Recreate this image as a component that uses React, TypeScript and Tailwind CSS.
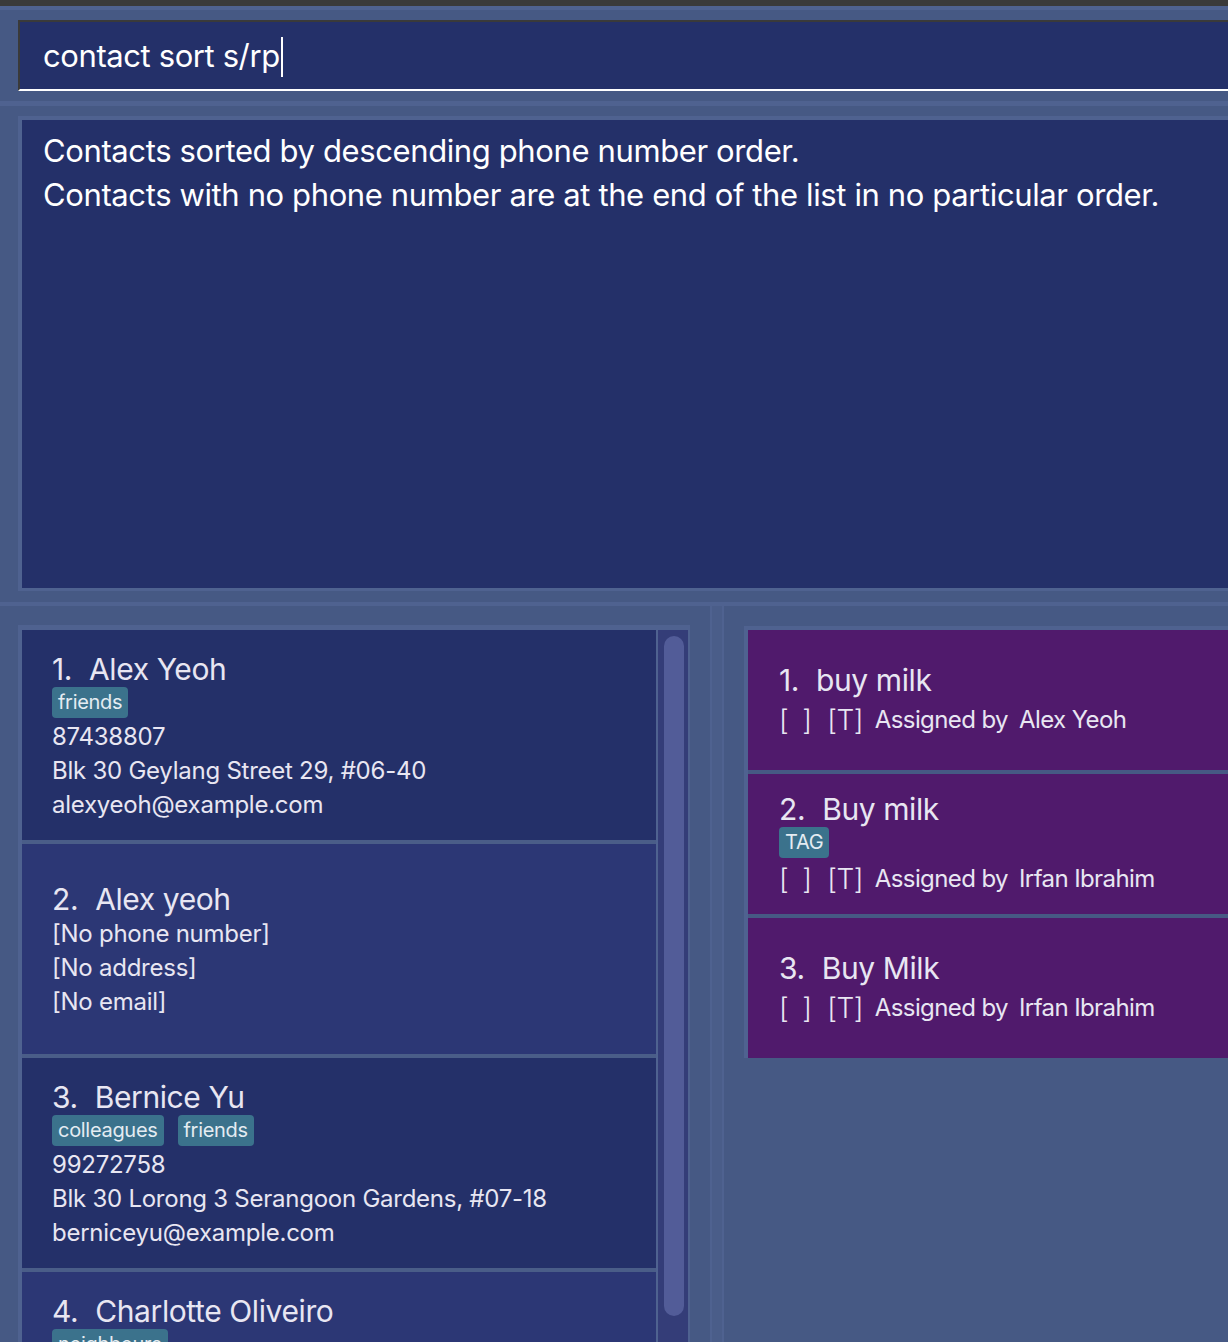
import React from "react";

type Contact = {
  name: string;
  tags: string[];
  lines: string[];
};

const contacts: Contact[] = [
  { name: "Alex Yeoh", tags: ["friends"], lines: ["87438807", "Blk 30 Geylang Street 29, #06-40", "alexyeoh@example.com"] },
  { name: "Alex yeoh", tags: [], lines: ["[No phone number]", "[No address]", "[No email]"] },
  { name: "Bernice Yu", tags: ["colleagues", "friends"], lines: ["99272758", "Blk 30 Lorong 3 Serangoon Gardens, #07-18", "berniceyu@example.com"] },
  { name: "Charlotte Oliveiro", tags: ["neighbours"], lines: ["93210283", "Blk 11 Ang Mo Kio Street 74, #11-04", "charlotte@example.com"] },
];

const tasks = [
  { name: "buy milk", tags: [] as string[], by: "Alex Yeoh" },
  { name: "Buy milk", tags: ["TAG"], by: "Irfan Ibrahim" },
  { name: "Buy Milk", tags: [] as string[], by: "Irfan Ibrahim" },
];

function Tag({ label }: { label: string }) {
  return (
    <span className="h-[31px] px-[6px] rounded-[4px] bg-[#3b728c] text-[#e4ecf2] text-[20px] leading-[31px] tracking-[-0.3px]">
      {label}
    </span>
  );
}

function ContactCard({ c, i }: { c: Contact; i: number }) {
  return (
    <div
      className={
        "h-[210px] shrink-0 flex flex-col justify-center pl-[30px] pt-[2px] text-[#e8e6f2] " +
        (i % 2 === 0 ? "bg-[#243069]" : "bg-[#2c3775]")
      }
    >
      <div className="flex text-[30px] leading-[36px] tracking-[-0.4px]">
        <span>{i + 1}.</span>
        <span className="ml-[17px]">{c.name}</span>
      </div>
      {c.tags.length > 0 && (
        <div className="flex gap-[14px] h-[33px] items-start">
          {c.tags.map((t) => (
            <Tag key={t} label={t} />
          ))}
        </div>
      )}
      {c.lines.map((l) => (
        <div key={l} className="text-[24px] leading-[34px] tracking-[-0.25px]">
          {l}
        </div>
      ))}
    </div>
  );
}

function TaskCard({ t, i }: { t: (typeof tasks)[number]; i: number }) {
  return (
    <div className="h-[140px] shrink-0 flex flex-col justify-center pl-[31px] bg-[#501a6c] text-[#e8e6f2]">
      <div className="flex text-[30px] leading-[36px] tracking-[-0.4px]">
        <span>{i + 1}.</span>
        <span className="ml-[17px]">{t.name}</span>
      </div>
      {t.tags.length > 0 && (
        <div className="flex gap-[14px] h-[31px] items-start">
          {t.tags.map((g) => (
            <Tag key={g} label={g} />
          ))}
        </div>
      )}
      <div className="flex items-center h-[40px] pt-[3px] text-[24px] tracking-[-0.6px]">
        <span className="text-[28px] font-light">[</span>
        <span className="text-[28px] font-light ml-[14px]">]</span>
        <span className="text-[28px] font-light ml-[16px]">[T]</span>
        <span className="ml-[12px]">Assigned by</span>
        <span className="ml-[11px]">{t.by}</span>
      </div>
    </div>
  );
}

export default function App() {
  return (
    <div className="w-[1228px] h-[1342px] overflow-hidden bg-[#465984] flex flex-col font-['Inter','Noto_Sans',sans-serif]">
      <div className="h-[6px] bg-[#3a3a3a] shrink-0" />
      <div className="h-[4px] bg-[#4f6290] shrink-0" />
      <div className="h-[10px] shrink-0" />

      {/* command box */}
      <div className="ml-[18px] h-[71px] shrink-0 border-t-2 border-l-2 border-[#3a3a3a] border-b-2 border-b-white bg-[#243069] flex items-center pl-[23px] pt-[2px]">
        <span className="text-white text-[31px] tracking-[-0.4px]">contact sort s/rp</span>
        <span className="w-[2px] h-[40px] bg-white ml-[1px]" />
      </div>

      <div className="h-[10px] shrink-0" />
      <div className="h-[5px] bg-[#4f6290] shrink-0" />
      <div className="h-[10px] shrink-0" />

      {/* result display */}
      <div className="ml-[18px] h-[475px] shrink-0 border-t-4 border-l-4 border-b-[3px] border-[#4f6290] bg-[#243069] pt-[9px] pl-[21px] text-white text-[31px] leading-[44px] tracking-[-0.38px]">
        <div>Contacts sorted by descending phone number order.</div>
        <div>Contacts with no phone number are at the end of the list in no particular order.</div>
      </div>

      <div className="h-[11px] shrink-0" />
      <div className="h-[4px] bg-[#4f6290] shrink-0" />

      <div className="flex flex-1 min-h-0">
        {/* contact list */}
        <div className="pt-[19px] pl-[18px] w-[690px] shrink-0 flex flex-col">
          <div className="flex flex-1 min-h-0 border-t-[5px] border-l-4 border-r-2 border-[#4f6290]">
            <div className="w-[634px] flex flex-col gap-[4px] bg-[#4a5d88] overflow-hidden">
              {contacts.map((c, i) => (
                <ContactCard key={c.name} c={c} i={i} />
              ))}
            </div>
            <div className="w-[2px] bg-[#4f6290]" />
            <div className="w-[30px] bg-[#343d78] pt-[6px] pl-[6px]">
              <div className="w-[20px] h-[680px] rounded-[10px] bg-[#525c98]" />
            </div>
          </div>
        </div>

        {/* splitter */}
        <div className="ml-[20px] w-[14px] shrink-0 border-x-2 border-[#4f6290] bg-[#4a5d89]" />

        {/* task list */}
        <div className="ml-[20px] flex-1 pt-[20px] flex flex-col">
          <div className="border-t-4 border-l-4 border-[#4f6290] flex flex-col gap-[4px]">
            {tasks.map((t, i) => (
              <TaskCard key={t.name + i} t={t} i={i} />
            ))}
          </div>
        </div>
      </div>
    </div>
  );
}
